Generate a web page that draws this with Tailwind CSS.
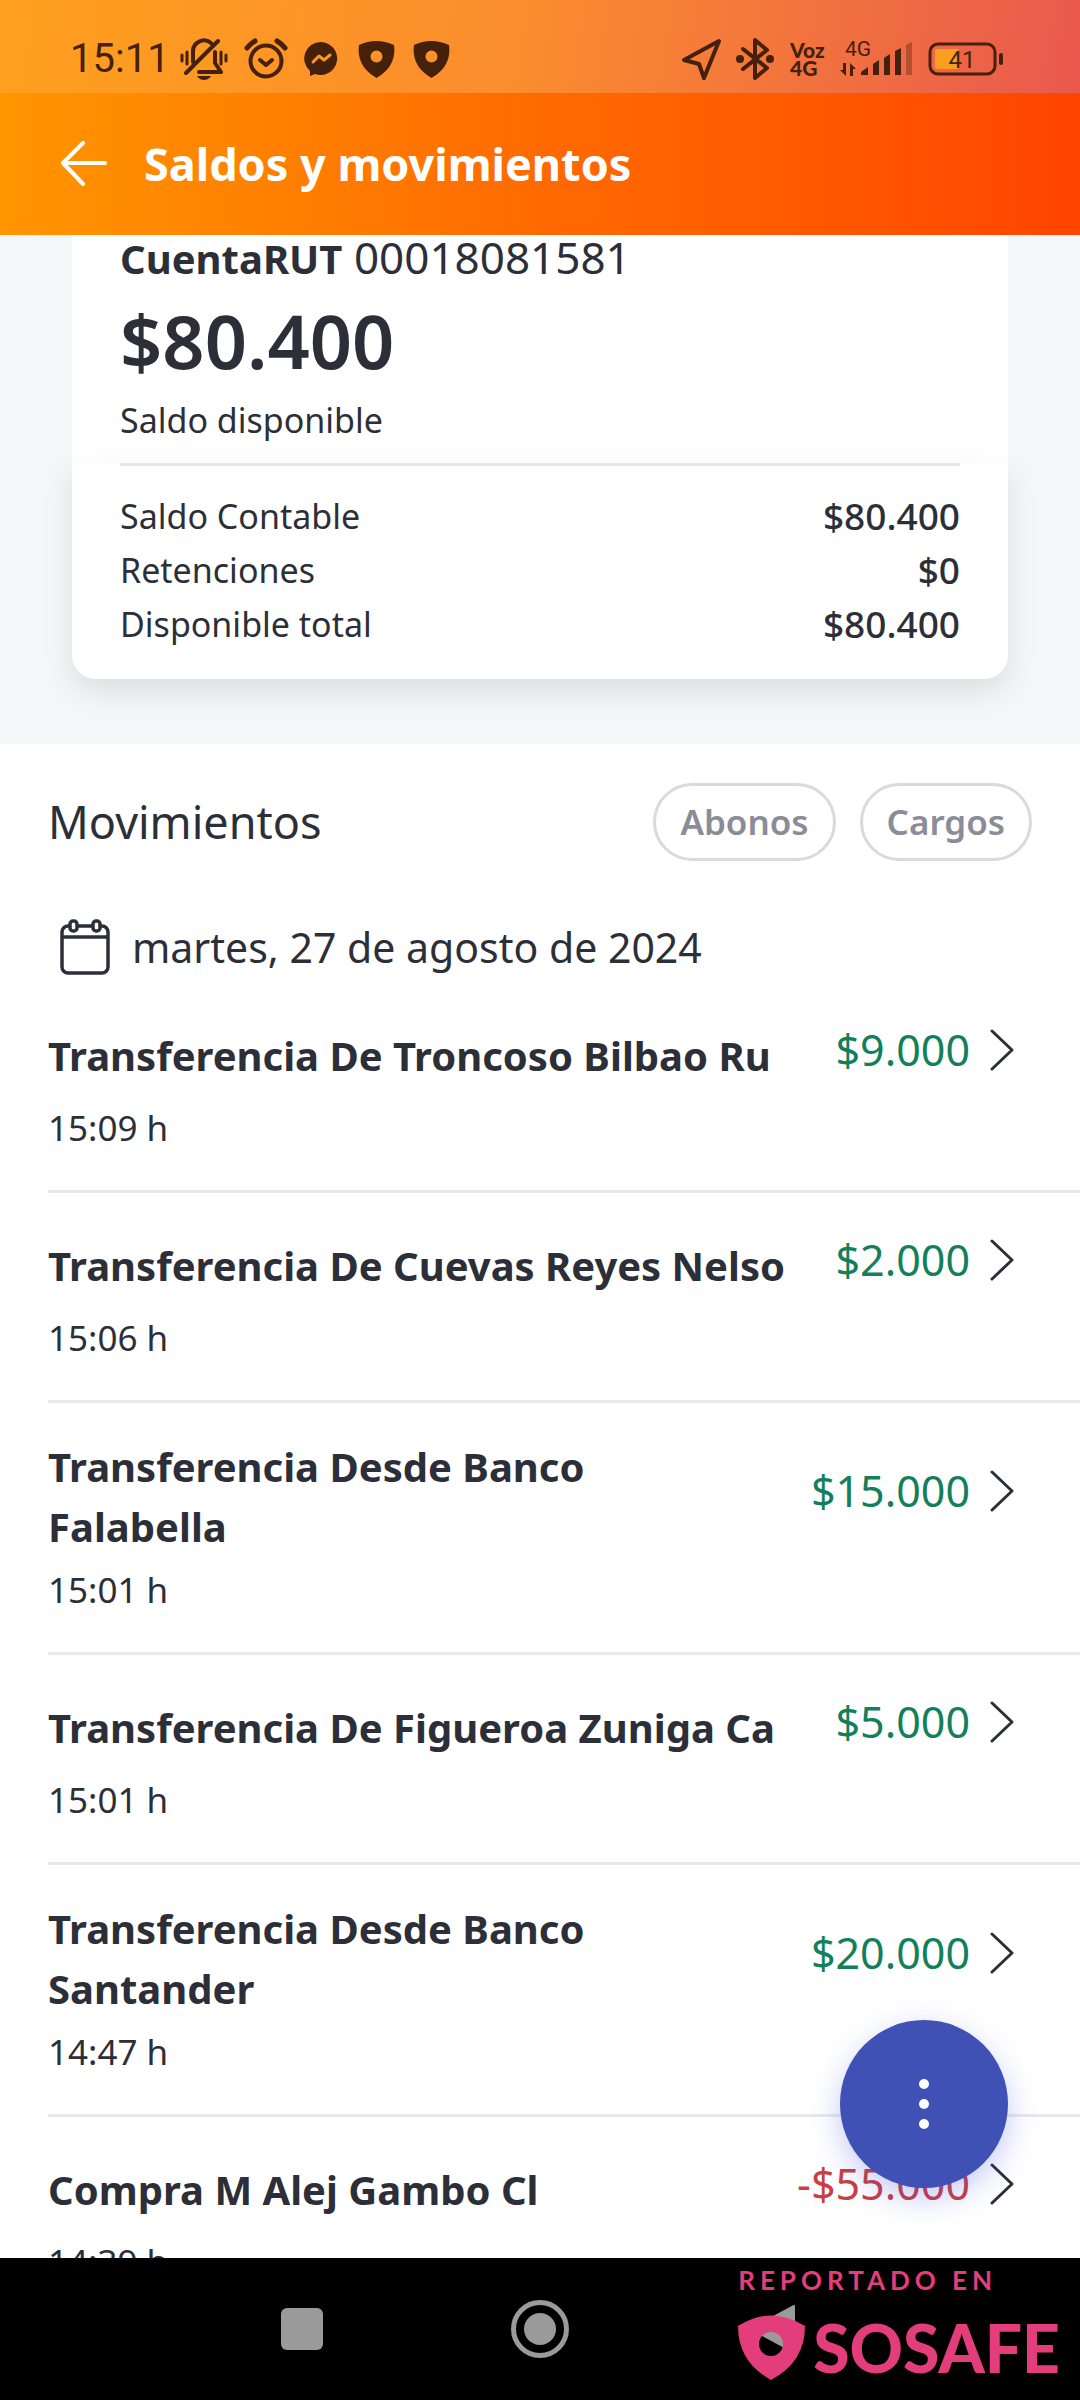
<!DOCTYPE html>
<html lang="es">
<head>
    <meta charset="UTF-8">
    <meta name="viewport" content="width=device-width, initial-scale=1.0">
    <title>Saldos y movimientos</title>
    <script src="https://cdn.jsdelivr.net/npm/@tailwindcss/browser@4"></script>
</head>
<body class="bg-white font-['Noto_Sans','Open_Sans',sans-serif] text-[#2d2f38]">
    <div class="relative flex h-screen flex-col overflow-hidden">

        <!-- Status bar -->
        <div class="flex h-[93px] shrink-0 items-center justify-between bg-linear-[100deg,#ffa01d_0%,#fb8d2e_48%,#e9594e_100%] pt-6 pr-[76px] pl-[70px] text-[#45200a]">
            <div class="flex items-center">
                <span class="mr-[10px] font-[Roboto,sans-serif] text-[40px] leading-[48px]">15:11</span>
                <svg class="mr-4" width="48" height="42" viewBox="0 0 48 42" fill="none" stroke="currentColor" stroke-linecap="round" stroke-linejoin="round">
                    <path stroke-width="3" d="M2 17v6M7 14v12M46 17v6M41 14v12"/>
                    <path stroke-width="4" d="M13 24V14a11 11 0 0 1 18-9M35 14v11l6 9H19M6 35 38 3"/>
                    <path fill="currentColor" stroke="none" d="M17 38h14c-2 3-5 4-7 4s-5-1-7-4z"/>
                </svg>
                <svg class="mr-4" width="44" height="42" viewBox="0 0 44 42" fill="none" stroke="currentColor" stroke-width="4" stroke-linecap="round">
                    <circle cx="22" cy="23" r="15.5"/>
                    <path d="m16 22 6 5 6-5" stroke-linejoin="round"/>
                    <path d="M3 10q3-4 8-7M41 10q-3-4-8-7" stroke-width="5"/>
                </svg>
                <svg class="mr-5" width="34" height="36" viewBox="0 0 34 36">
                    <path fill="currentColor" d="M17 1a16.500 16.500 0 1 1-6 32l-5 2v-5A16.500 16.500 0 0 1 17 1z"/>
                    <path fill="none" stroke="#fb9727" stroke-width="3" stroke-linejoin="round" stroke-linecap="round" d="m9 21 6-6 5 4 6-5"/>
                </svg>
                <svg class="mr-[18px]" width="37" height="38" viewBox="0 0 37 38" fill="currentColor" fill-rule="evenodd">
                    <path d="M1 5Q18-3 36 5q3 21-17.500 33Q-2 26 1 5zM18.500 10.500a6 6 0 1 0 0 12 6 6 0 0 0 0-12z"/>
                </svg>
                <svg width="37" height="38" viewBox="0 0 37 38" fill="currentColor" fill-rule="evenodd">
                    <path d="M1 5Q18-3 36 5q3 21-17.500 33Q-2 26 1 5zM18.500 10.500a6 6 0 1 0 0 12 6 6 0 0 0 0-12z"/>
                </svg>
            </div>
            <div class="flex items-center">
                <svg class="mr-[14px]" width="40" height="42" viewBox="0 0 40 42" fill="none" stroke="currentColor" stroke-width="4" stroke-linejoin="round">
                    <path d="M37 3 2 22l15 4 5 14z"/>
                </svg>
                <svg class="mr-4" width="38" height="42" viewBox="0 0 38 42" fill="none" stroke="currentColor" stroke-width="4" stroke-linecap="round" stroke-linejoin="round">
                    <path d="M7 11l24 19-12 10V2l12 10L7 31"/>
                    <circle cx="4" cy="21" r="4" fill="currentColor" stroke="none"/>
                    <circle cx="34" cy="21" r="4" fill="currentColor" stroke="none"/>
                </svg>
                <span class="mr-[14px] w-9 font-[Lato,sans-serif] text-[21px] leading-[18px] font-black">Voz<br>4G</span>
                <svg class="mr-4 overflow-visible" width="72" height="40" viewBox="0 0 72 40" fill="currentColor">
                    <text x="5" y="17" font-family="Roboto" font-size="21">4G</text>
                    <path d="M6 24v13l-6-6h3v-7zM10 37V24l6 6h-3v7z"/>
                    <path d="M21 36v-3l7-5v8zM33 36V25l6-4v15zM44 36V19l6-4v21zM55 36V12l6-3v27z"/>
                    <path d="M66 36V6l6-3v33z" opacity=".35"/>
                </svg>
                <svg width="76" height="34" viewBox="0 0 76 34" fill="none">
                    <rect x="7" y="7" width="24" height="20" rx="2" fill="#f9a11f"/>
                    <rect x="2" y="2" width="65" height="30" rx="8" stroke="currentColor" stroke-width="3"/>
                    <rect x="71" y="11" width="4" height="12" rx="2" fill="currentColor"/>
                    <text x="34" y="26" text-anchor="middle" font-family="Roboto" font-size="24" fill="currentColor">41</text>
                </svg>
            </div>
        </div>

        <!-- Header -->
        <header class="flex h-[142px] shrink-0 items-center bg-linear-to-r from-[#ff9500] via-[#ff6a00] to-[#ff4400] pl-[60px] text-white">
            <button type="button" aria-label="Volver" class="mr-9">
                <svg width="48" height="46" viewBox="0 0 48 46" fill="none" stroke="currentColor" stroke-width="4" stroke-linecap="round" stroke-linejoin="round">
                    <path d="M23 2 3 22l20 21M3 22h42"/>
                </svg>
            </button>
            <h1 class="text-[45px] leading-[60px] font-bold">Saldos y movimientos</h1>
        </header>

        <main class="min-h-0 flex-1 overflow-hidden">
            <!-- Account card -->
            <section class="bg-[#f5f6f8] px-[72px] pb-[65px]">
                <div class="bg-white px-12 pb-4">
                    <h2 class="text-[44px] leading-[44px]"><b class="text-[40px]">CuentaRUT</b> 00018081581</h2>
                    <p class="mt-5 text-[74px] leading-[80px] font-semibold">$80.400</p>
                    <p class="mt-3 text-[34px] leading-[54px]">Saldo disponible</p>
                </div>
                <div class="rounded-b-3xl bg-white px-12 pb-7 shadow-[0_12px_30px_rgba(0,0,0,0.10)]">
                    <dl class="border-t-[3px] border-[#e6e7ea] pt-[23px] text-[34px] leading-[54px]">
                        <div class="flex justify-between">
                            <dt>Saldo Contable</dt>
                            <dd class="text-[37px] font-medium">$80.400</dd>
                        </div>
                        <div class="flex justify-between">
                            <dt>Retenciones</dt>
                            <dd class="text-[37px] font-medium">$0</dd>
                        </div>
                        <div class="flex justify-between">
                            <dt>Disponible total</dt>
                            <dd class="text-[37px] font-medium">$80.400</dd>
                        </div>
                    </dl>
                </div>
            </section>

            <!-- Movements -->
            <section class="pt-[39px] pl-12">
                <div class="flex items-center justify-between pr-12">
                    <h2 class="text-[45px] leading-[60px]">Movimientos</h2>
                    <div class="flex gap-6">
                        <button type="button" class="h-[78px] rounded-full border-[3px] border-[#d9dade] px-6 text-[35px] font-semibold text-[#8a8c98]">Abonos</button>
                        <button type="button" class="h-[78px] rounded-full border-[3px] border-[#d9dade] px-6 text-[35px] font-semibold text-[#8a8c98]">Cargos</button>
                    </div>
                </div>

                <div class="mt-14 mb-[6px] flex items-center gap-[22px] pl-3">
                    <svg width="50" height="56" viewBox="0 0 50 56" fill="none" stroke="currentColor" stroke-width="3.500">
                        <rect x="2" y="7" width="46" height="47" rx="6"/>
                        <path d="M2 18h46"/>
                        <rect x="10" y="2" width="7" height="10" rx="3" fill="white"/>
                        <rect x="33" y="2" width="7" height="10" rx="3" fill="white"/>
                    </svg>
                    <h3 class="text-[41px] leading-[60px]">martes, 27 de agosto de 2024</h3>
                </div>

                <ul id="movimientos"></ul>
            </section>
        </main>

        <button type="button" aria-label="Más opciones" class="absolute right-[72px] bottom-[212px] flex size-[168px] flex-col items-center justify-center gap-[10px] rounded-full bg-[#3f51b5] shadow-[0_10px_30px_rgba(63,81,220,0.30)]">
            <span class="size-[10px] rounded-full bg-white"></span>
            <span class="size-[10px] rounded-full bg-white"></span>
            <span class="size-[10px] rounded-full bg-white"></span>
        </button>

        <!-- Android navigation bar -->
        <nav class="relative flex h-[142px] shrink-0 items-center justify-center gap-[178px] bg-black text-[#9a9a9a]">
            <button type="button" aria-label="Recientes">
                <svg width="60" height="60" viewBox="0 0 60 60"><rect x="9" y="9" width="42" height="42" rx="6" fill="currentColor"/></svg>
            </button>
            <button type="button" aria-label="Inicio">
                <svg width="60" height="60" viewBox="0 0 60 60">
                    <circle cx="30" cy="30" r="26.500" fill="none" stroke="currentColor" stroke-width="5"/>
                    <circle cx="30" cy="30" r="16" fill="currentColor"/>
                </svg>
            </button>
            <button type="button" aria-label="Atrás">
                <svg width="60" height="60" viewBox="0 0 60 60"><path fill="currentColor" stroke="currentColor" stroke-width="2" stroke-linejoin="round" d="M3 30 46 7v46z"/></svg>
            </button>

            <div class="absolute right-5 bottom-5 font-[Lato,sans-serif] text-[#e43d7b]">
                <p class="text-[26px] leading-[30px] font-bold tracking-[5px]">REPORTADO EN</p>
                <div class="mt-5 flex items-center gap-2">
                    <svg width="67" height="65" viewBox="0 0 67 65" fill="currentColor" fill-rule="evenodd">
                        <path d="M0 11Q33-10 67 11q0 36-34 54Q0 47 0 11zM33 17a12 12 0 1 0 0 24 12 12 0 0 0 0-24z"/>
                    </svg>
                    <span class="text-[66px] leading-[64px] font-black">SOSAFE</span>
                </div>
            </div>
        </nav>
    </div>

    <script>
        const movimientos = [
            { titulo: 'Transferencia De Troncoso Bilbao Ru', hora: '15:09 h', monto: '$9.000' },
            { titulo: 'Transferencia De Cuevas Reyes Nelso', hora: '15:06 h', monto: '$2.000' },
            { titulo: 'Transferencia Desde Banco<br>Falabella', hora: '15:01 h', monto: '$15.000' },
            { titulo: 'Transferencia De Figueroa Zuniga Ca', hora: '15:01 h', monto: '$5.000' },
            { titulo: 'Transferencia Desde Banco<br>Santander', hora: '14:47 h', monto: '$20.000' },
            { titulo: 'Compra M Alej Gambo Cl', hora: '14:39 h', monto: '-$55.000' }
        ];

        const lista = document.getElementById('movimientos');

        movimientos.forEach(m => {
            // Charges start with a minus sign and are shown in red
            const color = m.monto.startsWith('-') ? 'text-[#c93f42]' : 'text-[#12805a]';
            lista.innerHTML += `
                <li class="border-b-[3px] border-[#e9e9eb] pt-[34px] pb-[35px]">
                    <div class="flex min-h-[78px] justify-between pr-[66px]">
                        <p class="self-center text-[40px] leading-[60px] font-bold whitespace-nowrap">${m.titulo}</p>
                        <a href="#" class="flex items-center gap-5 pb-3 text-[43px] leading-[60px] ${color}">
                            ${m.monto}
                            <svg width="24" height="42" viewBox="0 0 24 42" fill="none" stroke="#2d2f38" stroke-width="3" stroke-linecap="round" stroke-linejoin="round">
                                <path d="m2 2 20 19L2 40"/>
                            </svg>
                        </a>
                    </div>
                    <p class="mt-[6px] text-[35px] leading-[54px]">${m.hora}</p>
                </li>
            `;
        });
    </script>
</body>
</html>
